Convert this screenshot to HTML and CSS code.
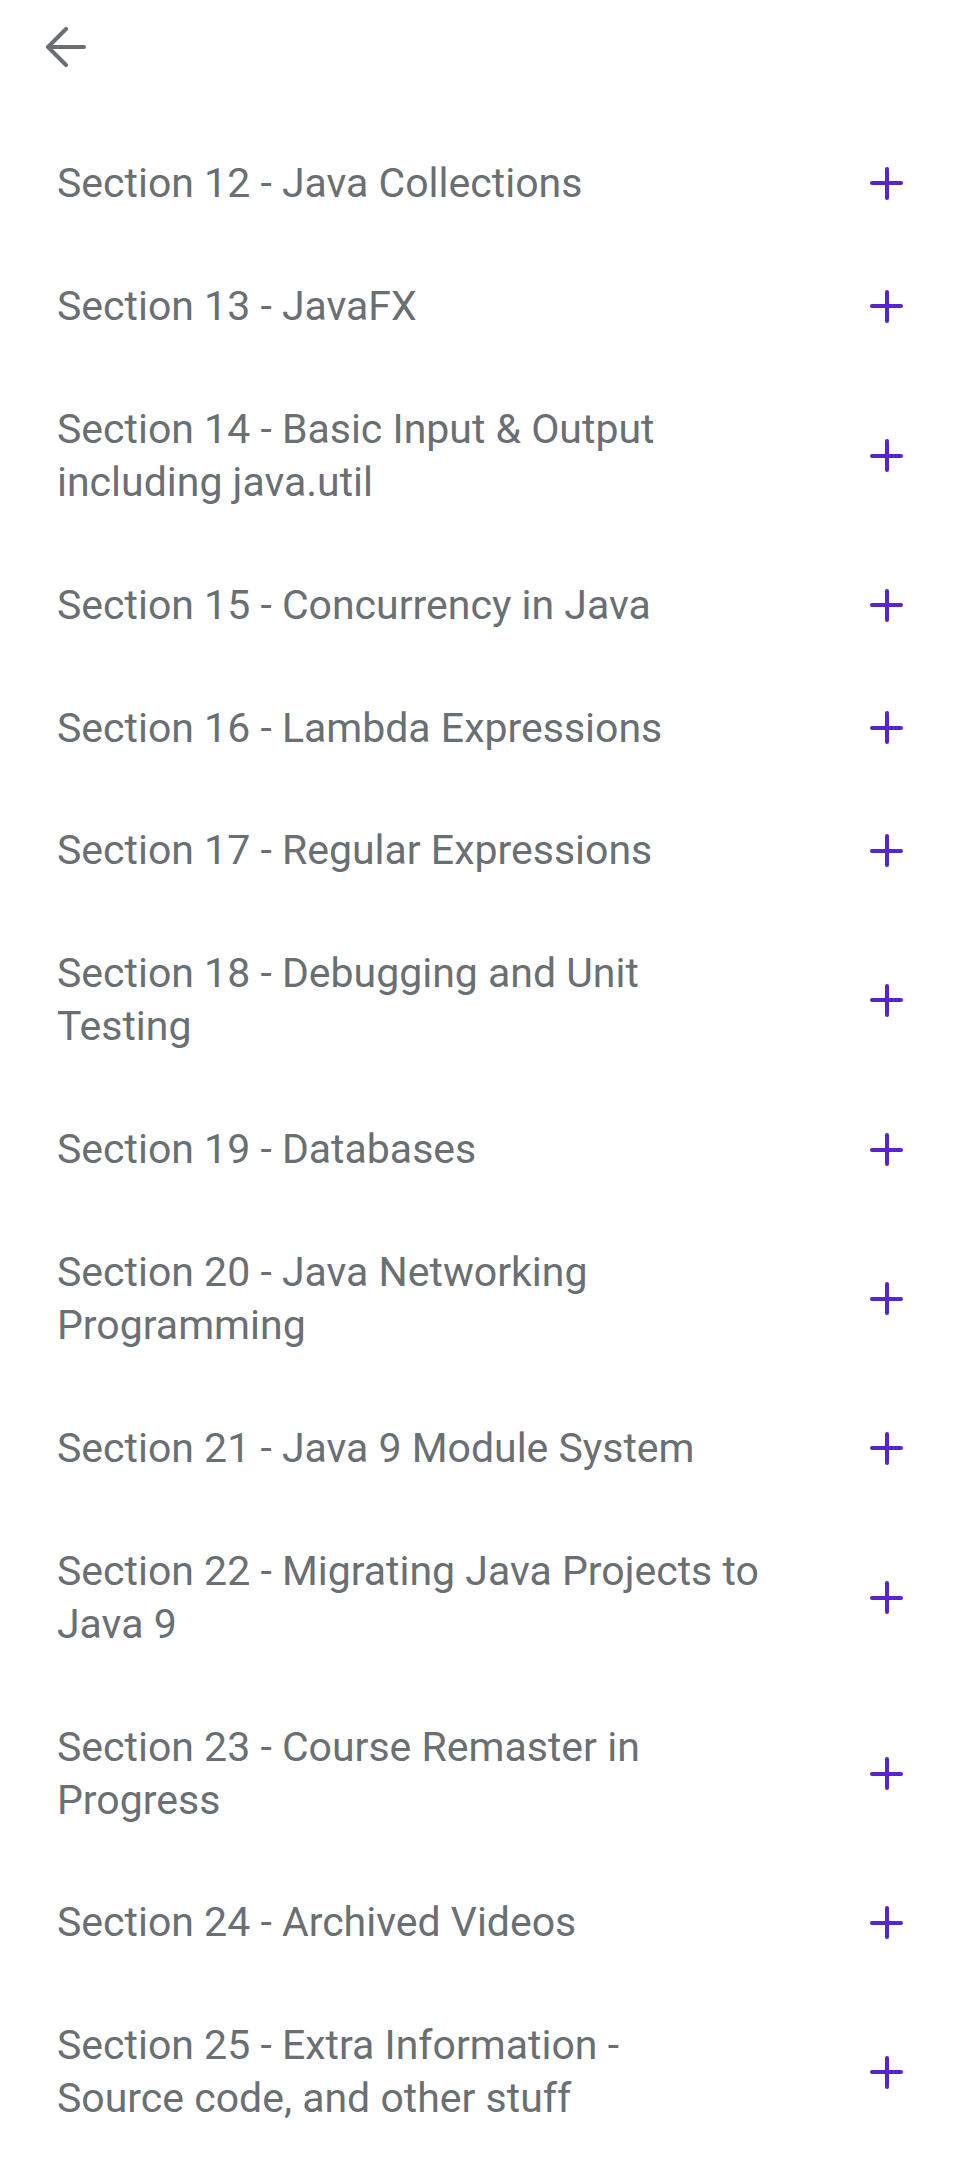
FILE: index.html
```html
<!DOCTYPE html>
<html lang="en">
<head>
<meta charset="utf-8">
<title>Course content</title>
<link rel="stylesheet" href="styles.css">
</head>
<body>
<header class="topbar">
  <button class="back" aria-label="Back">
    <svg width="40" height="40" viewBox="0 0 40 40" fill="none" stroke="#6a6f73" stroke-width="4" stroke-linecap="round" stroke-linejoin="round">
      <line x1="3" y1="20" x2="38" y2="20"/>
      <polyline points="20,2 2,20 20,38"/>
    </svg>
  </button>
</header>
<ul class="sections">
  <li class="section"><span class="title">Section 12 - Java Collections</span><span class="plus"></span></li>
  <li class="section"><span class="title">Section 13 - JavaFX</span><span class="plus"></span></li>
  <li class="section"><span class="title">Section 14 - Basic Input &amp; Output<br>including java.util</span><span class="plus"></span></li>
  <li class="section"><span class="title">Section 15 - Concurrency in Java</span><span class="plus"></span></li>
  <li class="section"><span class="title">Section 16 - Lambda Expressions</span><span class="plus"></span></li>
  <li class="section"><span class="title">Section 17 - Regular Expressions</span><span class="plus"></span></li>
  <li class="section"><span class="title">Section 18 - Debugging and Unit<br>Testing</span><span class="plus"></span></li>
  <li class="section"><span class="title">Section 19 - Databases</span><span class="plus"></span></li>
  <li class="section"><span class="title">Section 20 - Java Networking<br>Programming</span><span class="plus"></span></li>
  <li class="section"><span class="title">Section 21 - Java 9 Module System</span><span class="plus"></span></li>
  <li class="section"><span class="title">Section 22 - Migrating Java Projects to<br>Java 9</span><span class="plus"></span></li>
  <li class="section"><span class="title">Section 23 - Course Remaster in<br>Progress</span><span class="plus"></span></li>
  <li class="section"><span class="title">Section 24 - Archived Videos</span><span class="plus"></span></li>
  <li class="section"><span class="title">Section 25 - Extra Information -<br>Source code, and other stuff</span><span class="plus"></span></li>
</ul>
</body>
</html>
```
FILE: styles.css
```css
* { box-sizing: border-box; }
html, body { margin: 0; padding: 0; background: #ffffff; }
body {
  font-family: Roboto, "Liberation Sans", sans-serif;
  color: #6a6f73;
}
.topbar {
  height: 122px;
  display: flex;
  align-items: flex-start;
  padding: 27px 0 0 46px;
}
.back {
  border: 0;
  background: none;
  padding: 0;
  width: 40px;
  height: 40px;
  display: block;
}
.back svg { display: block; }
.sections {
  list-style: none;
  margin: 0;
  padding: 0;
}
.section {
  display: flex;
  align-items: center;
  padding: 35px 69px 35px 57px;
}
.title {
  flex: 1;
  font-size: 41px;
  line-height: 52.9px;
  padding-right: 40px;
}
.plus {
  position: relative;
  width: 33px;
  height: 33px;
  flex: none;
}
.plus::before, .plus::after {
  content: "";
  position: absolute;
  background: #5624d0;
  border-radius: 2px;
}
.plus::before { left: 0; top: 14.5px; width: 33px; height: 4px; }
.plus::after { top: 0; left: 14.5px; width: 4px; height: 33px; }
```
